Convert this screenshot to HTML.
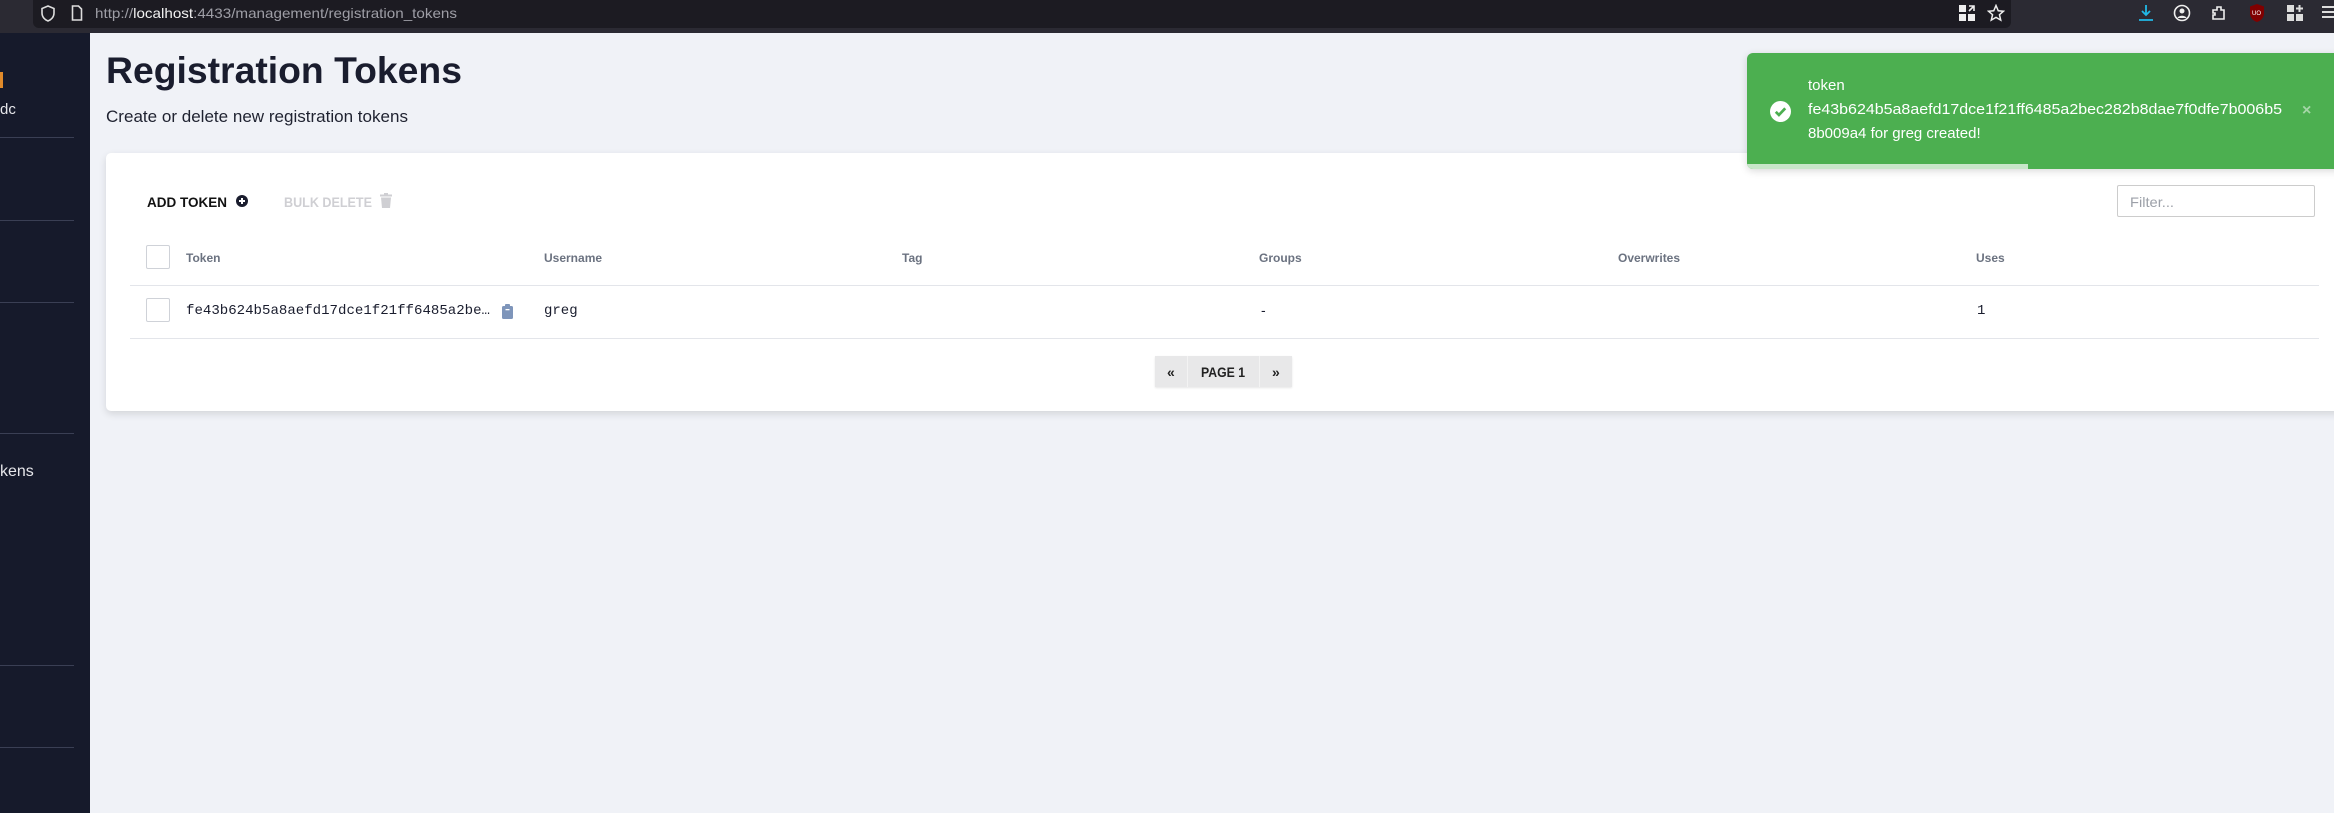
<!DOCTYPE html>
<html><head><meta charset="utf-8"><style>
*{margin:0;padding:0;box-sizing:border-box}
body{width:2334px;height:813px;overflow:hidden;background:#f0f2f7;font-family:"Liberation Sans",sans-serif;position:relative}
.a{position:absolute;white-space:nowrap}
.f{display:inline-block;transform-origin:0 50%}
.hd{font-size:12px;font-weight:bold;color:#6b7280;top:251px}
.ln{position:absolute;height:1px;background:#e3e5ea}
.sl{position:absolute;left:0;width:74px;height:1px;background:#3a3f54}
.cb{position:absolute;width:24px;height:24px;border:1px solid #cfd2d8;border-radius:2px;background:#fff;left:146px}
</style></head><body>
<div class="a" style="left:0;top:0;width:2334px;height:33px;background:#2b2a33"></div>
<div class="a" style="left:33px;top:0;width:1978px;height:28px;background:#1c1b22;border-radius:0 0 6px 6px"></div>
<svg class="a" style="left:41px;top:5px" width="14" height="17" viewBox="0 0 14 17"><path d="M7 1 L13 3.5 V8 C13 12 10 15 7 16 C4 15 1 12 1 8 V3.5 Z" fill="none" stroke="#ddd" stroke-width="1.6"/></svg>
<svg class="a" style="left:71px;top:5px" width="12" height="16" viewBox="0 0 12 16"><path d="M1.5 1 H7.5 L10.5 4 V15 H1.5 Z" fill="none" stroke="#ddd" stroke-width="1.6"/></svg>
<div class="a" style="left:95px;top:5px;font-size:14px;color:#9e9ea6"><span class="f" style="--w:362px">http://<span style="color:#f2f2f2">localhost</span>:4433/management/registration_tokens</span></div>
<svg class="a" style="left:1959px;top:5px" width="16" height="16" viewBox="0 0 16 16" fill="#eee"><rect x="0" y="0" width="7" height="7"/><rect x="0" y="9" width="7" height="7"/><rect x="9" y="9" width="7" height="7"/><path d="M10 1h5v5M15 1l-5 5" stroke="#eee" stroke-width="1.6" fill="none"/></svg>
<svg class="a" style="left:1987px;top:4px" width="18" height="18" viewBox="0 0 24 24"><path d="M12 2l3 7 7 .6-5.4 4.7 1.7 7.2L12 17.8 5.7 21.5l1.7-7.2L2 9.6 9 9z" fill="none" stroke="#eee" stroke-width="2"/></svg>
<svg class="a" style="left:2137px;top:4px" width="18" height="18" viewBox="0 0 18 18"><path d="M9 1v10M5 7l4 4 4-4M2 16h14" fill="none" stroke="#21b8e6" stroke-width="1.8"/></svg>
<svg class="a" style="left:2173px;top:4px" width="18" height="18" viewBox="0 0 18 18"><circle cx="9" cy="9" r="7.5" fill="none" stroke="#eee" stroke-width="1.6"/><circle cx="9" cy="7" r="2.5" fill="#eee"/><path d="M4.5 14c1-3 8-3 9 0" fill="#eee"/></svg>
<svg class="a" style="left:2210px;top:4px" width="18" height="18" viewBox="0 0 18 18"><path d="M3 6h4V3h4v3h3v9H3v-4h2V9H3z" fill="none" stroke="#eee" stroke-width="1.6"/></svg>
<svg class="a" style="left:2249px;top:3px" width="16" height="20" viewBox="0 0 16 20"><path d="M8 1l7 2.5V10c0 5-3.5 8-7 9-3.5-1-7-4-7-9V3.5z" fill="#800000"/><text x="3" y="12" font-size="6" fill="#fff" font-family="Liberation Sans">UO</text></svg>
<svg class="a" style="left:2287px;top:5px" width="17" height="17" viewBox="0 0 17 17" fill="#ddd"><rect x="0" y="0" width="7" height="7"/><rect x="0" y="9" width="7" height="7"/><rect x="9" y="9" width="7" height="7"/><path d="M12.5 0v7M9 3.5h7" stroke="#ddd" stroke-width="2"/></svg>
<div class="a" style="left:2322px;top:6px;width:12px;height:2px;background:#ddd;box-shadow:0 5px 0 #ddd,0 10px 0 #ddd"></div>
<div class="a" style="left:0;top:33px;width:90px;height:780px;background:#161a2b"></div>
<div class="a" style="left:0;top:72px;width:3px;height:16px;background:#e08a2a"></div>
<div class="a" style="left:0;top:101px;font-size:15px;color:#e6e6ea">dc</div>
<div class="sl" style="top:137px"></div><div class="sl" style="top:220px"></div><div class="sl" style="top:302px"></div>
<div class="sl" style="top:433px"></div><div class="sl" style="top:665px"></div><div class="sl" style="top:747px"></div>
<div class="a" style="left:0;top:463px;font-size:16px;color:#e6e6ea">kens</div>
<div class="a" style="left:106px;top:50px;font-size:37px;font-weight:bold;color:#1a1d2e"><span class="f" style="--w:356px">Registration Tokens</span></div>
<div class="a" style="left:106px;top:107px;font-size:17px;color:#1f2230"><span class="f" style="--w:302px">Create or delete new registration tokens</span></div>
<div class="a" style="left:106px;top:153px;width:2240px;height:258px;background:#fff;border-radius:5px;box-shadow:0 3px 8px rgba(0,0,0,.12)"></div>
<div class="a" style="left:147px;top:194px;font-size:14px;font-weight:bold;color:#111"><span class="f" style="--w:80px">ADD TOKEN</span></div>
<div class="a" style="left:236px;top:195px;width:12px;height:12px;border-radius:50%;background:#1a1d2e"></div>
<div class="a" style="left:239px;top:200px;width:6px;height:2px;background:#fff"></div>
<div class="a" style="left:241px;top:198px;width:2px;height:6px;background:#fff"></div>
<div class="a" style="left:284px;top:194px;font-size:14px;font-weight:bold;color:#cfcfd3"><span class="f" style="--w:88px">BULK DELETE</span></div>
<svg class="a" style="left:380px;top:193px" width="12" height="15" viewBox="0 0 12 15" fill="#cfcfd3"><rect x="0" y="1.5" width="12" height="2"/><rect x="4" y="0" width="4" height="2"/><path d="M1 4.5h10l-1 10.5H2z"/></svg>
<div class="a" style="left:2117px;top:185px;width:198px;height:32px;border:1px solid #ccc;border-radius:2px;background:#fff"></div>
<div class="a" style="left:2130px;top:194px;font-size:14px;color:#9ca0a8"><span class="f" style="--w:44px">Filter...</span></div>
<div class="cb" style="top:245px"></div>
<div class="a hd" style="left:186px">Token</div>
<div class="a hd" style="left:544px">Username</div>
<div class="a hd" style="left:902px">Tag</div>
<div class="a hd" style="left:1259px">Groups</div>
<div class="a hd" style="left:1618px">Overwrites</div>
<div class="a hd" style="left:1976px">Uses</div>
<div class="ln" style="left:130px;top:285px;width:2189px"></div>
<div class="cb" style="top:298px"></div>
<div class="a" style="left:186px;top:303px;font-family:'Liberation Mono',monospace;font-size:14px;color:#1a1d2e"><span class="f" style="--w:304px">fe43b624b5a8aefd17dce1f21ff6485a2be…</span></div>
<svg class="a" style="left:502px;top:304px" width="11" height="15" viewBox="0 0 11 15"><rect x="0" y="2" width="11" height="13" rx="1.5" fill="#7e95ba"/><rect x="3" y="0" width="5" height="4" rx="1" fill="#7e95ba"/><rect x="3.5" y="5" width="4" height="1.3" fill="#fff"/></svg>
<div class="a" style="left:544px;top:303px;font-family:'Liberation Mono',monospace;font-size:14px;color:#1a1d2e">greg</div>
<div class="a" style="left:1261px;top:302px;font-size:14px;color:#1a1d2e">-</div>
<div class="a" style="left:1977px;top:303px;font-family:'Liberation Mono',monospace;font-size:14px;color:#1a1d2e">1</div>
<div class="ln" style="left:130px;top:338px;width:2189px"></div>
<div class="a" style="left:1155px;top:356px;width:137px;height:31px;background:#e8e8e9;box-shadow:0 1px 2px rgba(0,0,0,.1)"></div>
<div class="a" style="left:1187px;top:356px;width:1px;height:31px;background:#f3f3f3"></div>
<div class="a" style="left:1259px;top:356px;width:1px;height:31px;background:#f3f3f3"></div>
<div class="a" style="left:1167px;top:364px;font-size:14px;font-weight:bold;color:#222">«</div>
<div class="a" style="left:1201px;top:364px;font-size:14px;font-weight:bold;color:#222"><span class="f" style="--w:44px">PAGE 1</span></div>
<div class="a" style="left:1272px;top:364px;font-size:14px;font-weight:bold;color:#222">»</div>
<div class="a" style="left:1747px;top:53px;width:600px;height:116px;background:#4caf50;border-radius:6px;box-shadow:0 2px 8px rgba(0,0,0,.15);overflow:hidden">
<div style="position:absolute;left:0;bottom:0;width:281px;height:5px;background:#c8e6c9"></div></div>
<svg class="a" style="left:1770px;top:101px" width="21" height="21" viewBox="0 0 20 20"><circle cx="10" cy="10" r="10" fill="#fff"/><path d="M5.5 10.3l3 3 6-6.3" fill="none" stroke="#4caf50" stroke-width="2.6"/></svg>
<div class="a" style="left:1808px;top:74px;font-size:15px;line-height:24px;color:#fff">token<br><span class="f" style="--w:474px">fe43b624b5a8aefd17dce1f21ff6485a2bec282b8dae7f0dfe7b006b5</span><br>8b009a4 for greg created!</div>
<div class="a" style="left:2302px;top:102px;font-size:16px;font-weight:bold;color:#a5d6a7">×</div>
<script>
document.querySelectorAll('.f').forEach(function(e){var w=parseFloat(getComputedStyle(e).getPropertyValue('--w'));var r=e.getBoundingClientRect().width;if(w&&r)e.style.transform='scaleX('+(w/r)+')';});
</script>
</body></html>
